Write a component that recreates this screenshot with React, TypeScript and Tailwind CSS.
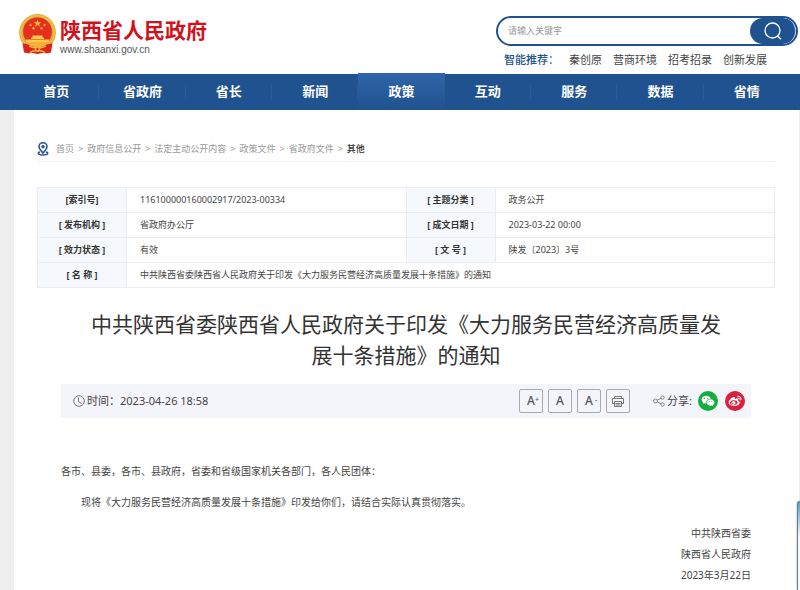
import type { ReactNode } from "react";
import { RiWechatFill, RiWeiboFill } from "react-icons/ri";

const navItems = ["首页", "省政府", "省长", "新闻", "政策", "互动", "服务", "数据", "省情"];
const hotWords = ["秦创原", "营商环境", "招考招录", "创新发展"];
const crumbs = ["首页", "政府信息公开", "法定主动公开内容", "政策文件", "省政府文件"];

const infoRows = [
  ["[索引号]", "116100000160002917/2023-00334", "[ 主题分类 ]", "政务公开"],
  ["[ 发布机构 ]", "省政府办公厅", "[ 成文日期 ]", "2023-03-22 00:00"],
  ["[ 效力状态 ]", "有效", "[ 文 号 ]", "陕发〔2023〕3号"],
];

const title = "中共陕西省委陕西省人民政府关于印发《大力服务民营经济高质量发展十条措施》的通知";

function Emblem() {
  return (
    <svg className="h-10 w-[37px]" viewBox="0 0 37 40" aria-hidden="true">
      <circle cx="18.500" cy="18.500" r="18.400" fill="#e0aa38" />
      <circle cx="18.500" cy="18.500" r="16.700" fill="none" stroke="#eec04c" strokeWidth="1.500" />
      <circle cx="18.500" cy="17.800" r="14.400" fill="#e5301f" />
      <path d="M18.500 5.500l1 2.700h2.800l-2.200 1.700.8 2.800-2.400-1.700-2.400 1.700.8-2.800-2.200-1.700h2.800z" fill="#f8b93a" />
      <g fill="#f5a838">
        <circle cx="11.500" cy="11" r="1.200" />
        <circle cx="25.500" cy="11" r="1.200" />
        <circle cx="14.500" cy="14.300" r="1.200" />
        <circle cx="22.500" cy="14.300" r="1.200" />
      </g>
      <path d="M13.500 21.500h10v2h-10zM12 23.500h13v1.500H12zM7 25.500h23v2.500H7z" fill="#fbc94c" />
      <path d="M4 28h29l-4 5H8z" fill="#f4b03a" />
      <path d="M3.500 29.500q5.500 0 8.500 2.500l6.500 2 6.500-2q3-2.500 8.500-2.500L32 38.500q-4 1.500-7.500.3L18.500 40l-6-1.200Q9 40 5 38.500z" fill="#dc241b" />
      <path d="M10 32q4 2 8.500 2t8.500-2M11 38.500q3-2.500 7.500-1.500 4.500-1 7.500 1.500" fill="none" stroke="#f4b53c" strokeWidth="1.400" />
      <circle cx="18.500" cy="35" r="2.800" fill="#f4b53c" />
      <circle cx="18.500" cy="35" r="1.200" fill="#dc241b" />
    </svg>
  );
}

function PinIcon() {
  return (
    <svg className="h-[14px] w-3" viewBox="0 0 12 14" fill="none" stroke="#2a5896" aria-hidden="true">
      <path d="M6 11C4 8.500 2 6.900 2 4.700a4 4 0 0 1 8 0C10 6.900 8 8.500 6 11z" strokeWidth="1.600" />
      <circle cx="6" cy="4.700" r="1.300" fill="#2a5896" />
      <path d="M3 10C.2 10.600.2 13 6 13s5.800-2.400 3-3" strokeWidth="1.500" />
    </svg>
  );
}

function PrinterIcon() {
  return (
    <svg className="size-3" viewBox="0 0 12 12" fill="none" stroke="#777" strokeWidth="1" aria-hidden="true">
      <path d="M2.500 3.500v-2h7v2" />
      <path d="M2.500 8.500h-2v-5h11v5h-2" />
      <path d="M2.500 6.500h7v5h-7zM3.500 8.500h5M3.500 10h5" />
    </svg>
  );
}

function ToolButton({ label, children }: { label: string; children: ReactNode }) {
  return (
    <button
      type="button"
      aria-label={label}
      className="relative flex size-6 items-center justify-center rounded-xs border border-[#aaa] text-xs font-medium text-[#555]"
    >
      {children}
    </button>
  );
}

function Header() {
  return (
    <header className="flex justify-between bg-white pr-0.5 pl-[19px]">
      <a href="#" className="flex items-start gap-1 pt-[14px]">
        <Emblem />
        <div className="pt-0.5">
          <div className="text-[21px] leading-7 font-bold text-[#d0121b]">陕西省人民政府</div>
          <div className="font-[Liberation_Sans,sans-serif] text-[10px] leading-3 text-[#555]">www.shaanxi.gov.cn</div>
        </div>
      </a>
      <div className="w-[302px] pt-4">
        <form className="flex h-[30px] overflow-hidden rounded-full border-2 border-[#20528f]">
          <input
            type="text"
            aria-label="搜索"
            placeholder="请输入关键字"
            className="min-w-0 flex-1 pl-2.5 text-[9px] outline-none placeholder:text-[#999]"
          />
          <button
            type="button"
            aria-label="搜索"
            className="flex w-[46px] items-center justify-center rounded-full border-r border-[#a9c0dc] bg-[#20528f]"
          >
            <svg className="size-[18px]" viewBox="0 0 18 18" fill="none" stroke="#fff" strokeWidth="1.300" aria-hidden="true">
              <circle cx="8.500" cy="8.500" r="7.500" />
              <path d="M13.500 14l3.500 3.300" />
            </svg>
          </button>
        </form>
        <div className="flex h-7 items-center pl-2 text-[11px] text-[#444]">
          <span className="w-[65px] font-medium text-[#20528f]">智能推荐：</span>
          <div className="flex gap-[11px]">
            {hotWords.map((word) => (
              <a key={word} href="#">
                {word}
              </a>
            ))}
          </div>
        </div>
      </div>
    </header>
  );
}

function Nav() {
  return (
    <nav className="flex h-9 bg-[#20528f] pr-2.5 pl-[13px]">
      {navItems.map((item) => (
        <a
          key={item}
          href="#"
          className={
            item === "政策"
              ? "-mt-px flex flex-1 items-center justify-center bg-linear-to-b from-[#2f65a9] to-[#20528f] text-[13px] font-bold text-white"
              : "flex flex-1 items-center justify-center bg-[linear-gradient(#2a5b98,#2a5b98)] bg-[length:1px_14px] bg-right bg-no-repeat text-[13px] font-bold text-white last:bg-none"
          }
        >
          {item}
        </a>
      ))}
    </nav>
  );
}

function InfoTable() {
  const th = "w-[89px] border border-[#ececee] bg-[#f5f9fd] text-center font-bold text-[#333]";
  const td = "border border-[#ececee] px-[13px] text-[#444]";

  return (
    <table className="mt-[25px] w-full table-fixed border-collapse text-[9px]">
      <tbody>
        {infoRows.map(([labelA, valueA, labelB, valueB]) => (
          <tr key={labelA} className="h-[25px]">
            <th scope="row" className={th}>{labelA}</th>
            <td className={td}>{valueA}</td>
            <th scope="row" className={th}>{labelB}</th>
            <td className={td}>{valueB}</td>
          </tr>
        ))}
        <tr className="h-[25px]">
          <th scope="row" className={th}>[ 名 称 ]</th>
          <td colSpan={3} className={td}>{title}</td>
        </tr>
      </tbody>
    </table>
  );
}

function MetaBar() {
  return (
    <div className="mt-[13px] flex h-[34px] items-center justify-between bg-[#f4f5fb] pr-1.5 pl-3 text-[11px] text-[#444]">
      <div className="flex items-center gap-0.5">
        <svg className="size-3" viewBox="0 0 12 12" fill="none" stroke="#777" aria-hidden="true">
          <circle cx="6" cy="6" r="5.300" />
          <path d="M5.500 2.500v4l3 2" />
        </svg>
        <span>时间：2023-04-26 18:58</span>
      </div>
      <div className="flex items-center">
        <div className="flex gap-[5px]">
          <ToolButton label="放大字体">
            A<sup className="absolute top-1.5 right-[3px] text-[7px] leading-none">+</sup>
          </ToolButton>
          <ToolButton label="默认字体">A</ToolButton>
          <ToolButton label="缩小字体">
            A<sup className="absolute top-1.5 right-[3px] text-[7px] leading-none">-</sup>
          </ToolButton>
          <ToolButton label="打印">
            <PrinterIcon />
          </ToolButton>
        </div>
        <svg className="ml-[23px] size-3" viewBox="0 0 12 12" fill="none" stroke="#777" strokeWidth="0.900" aria-hidden="true">
          <circle cx="2.500" cy="6" r="1.900" />
          <circle cx="9.500" cy="2.500" r="1.700" />
          <circle cx="9.500" cy="9.500" r="1.700" />
          <path d="M4.200 5.200L8 3.200M4.200 6.800L8 8.800" />
        </svg>
        <span className="ml-0.5">分享:</span>
        <button type="button" aria-label="微信" className="ml-1.5 flex size-5 items-center justify-center rounded-full bg-[#15ad3c] text-white">
          <RiWechatFill className="size-3.5" />
        </button>
        <button type="button" aria-label="微博" className="ml-[7px] flex size-5 items-center justify-center rounded-full bg-[#dc1f3c] text-white">
          <RiWeiboFill className="size-3.5" />
        </button>
      </div>
    </div>
  );
}

export default function App() {
  return (
    <div
      lang="zh-CN"
      className="relative min-h-screen bg-[#efefef] font-[Noto_Sans,Noto_Sans_CJK_SC,sans-serif]"
    >
      <Header />
      <Nav />
      <main className="mr-px ml-[14px] bg-white px-6 pt-[26px] pb-1">
        <div className="-ml-px">
          <div className="flex h-[26px] items-center gap-[7px] border-b border-[#f0f0f0] text-[9px] text-[#999]">
            <PinIcon />
            <div className="flex gap-1">
              {crumbs.map((crumb) => (
                <span key={crumb} className="flex gap-1">
                  <a href="#">{crumb}</a>
                  <span>&gt;</span>
                </span>
              ))}
              <span className="font-medium text-[#333]">其他</span>
            </div>
          </div>
          <InfoTable />
          <article className="px-6 pt-[21px]">
            <h1 className="px-6 text-center text-[21px] leading-[31px] text-[#333]">{title}</h1>
            <MetaBar />
            <div className="pt-[43px] text-[10px] leading-[21px] text-[#444]">
              <p className="mb-2.5">各市、县委，各市、县政府，省委和省级国家机关各部门，各人民团体：</p>
              <p className="mb-2.5 indent-[2em]">
                现将《大力服务民营经济高质量发展十条措施》印发给你们，请结合实际认真贯彻落实。
              </p>
              <div className="text-right">
                <p>中共陕西省委</p>
                <p>陕西省人民政府</p>
                <p>2023年3月22日</p>
              </div>
            </div>
          </article>
        </div>
      </main>
      <aside className="absolute right-0 bottom-0 h-[89px] w-[3px] rounded-tl-sm border-t border-l border-[#777] bg-linear-to-b from-[#3aa5d8] to-[#f3fafd] to-40% shadow-[0_0_2px_#999]" />
    </div>
  );
}
